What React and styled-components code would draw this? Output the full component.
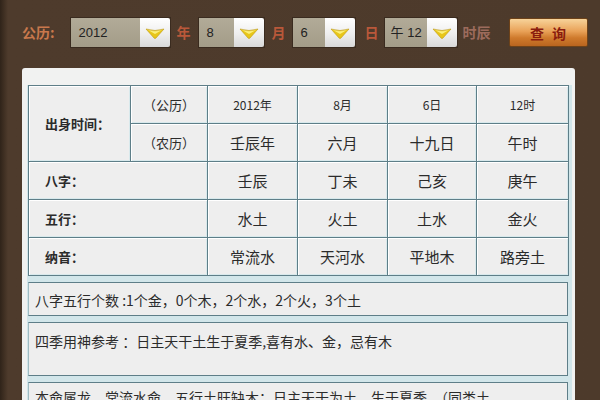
import React from "react";
import styled, { createGlobalStyle } from "styled-components";

const Global = createGlobalStyle`
  html, body { margin: 0; padding: 0; }
  body { background: #4d3a2b; font-family: "Noto Sans CJK SC", "Noto Sans", sans-serif; }
`;

const Page = styled.div`
  width: 600px;
  height: 400px;
  overflow: hidden;
  box-sizing: border-box;
  background: linear-gradient(90deg, #2f2319 0, #3f2f22 4px, #4e3b2c 8px, #4d3a2b 100%);
  display: flex;
  flex-direction: column;
`;

const Toolbar = styled.div`
  height: 68px;
  flex-shrink: 0;
  box-sizing: border-box;
  padding: 18px 0 0 22px;
  display: flex;
  align-items: flex-start;
`;

const Label = styled.span`
  height: 29px;
  line-height: 29px;
  font-size: 14px;
  font-weight: bold;
  color: ${(p) => p.$color || "#c46a3f"};
  margin: 0 ${(p) => p.$mr || 8}px 0 ${(p) => p.$ml || 0}px;
  white-space: nowrap;
`;

const Select = styled.div`
  display: flex;
  height: 29px;
  box-shadow: 0 0 0 1px #3a2b1f;
`;

const SelectValue = styled.div`
  width: ${(p) => p.$w}px;
  background: linear-gradient(#b2ab98, #a39c88);
  color: #222;
  font-family: "Liberation Sans", "Noto Sans CJK SC", sans-serif;
  font-size: 13px;
  line-height: 29px;
  padding-left: ${(p) => p.$pl || 8}px;
  box-sizing: border-box;
  white-space: nowrap;
`;

const SelectButton = styled.div`
  width: 30px;
  background: linear-gradient(#ffffff, #eeeeee 55%, #d9d9d9);
  border-radius: 0 2px 2px 0;
  display: flex;
  align-items: center;
  justify-content: center;
`;

const Arrow = () => (
  <svg width="20" height="12" viewBox="0 0 20 12">
    <path d="M1 2 Q10 5 19 2 L11 11 Q10 12 9 11 Z" fill="#e8c619" stroke="#c09a10" strokeWidth="0.6" />
    <path d="M3 3 Q10 5.5 17 3 L10 7 Z" fill="#fbf07a" />
  </svg>
);

const QueryButton = styled.button`
  margin-left: 10px;
  width: 79px;
  height: 29px;
  border: 1px solid #6d4219;
  border-radius: 2px;
  background: linear-gradient(#f7d39a, #e9a258 45%, #cf7a2c 70%, #b9651f);
  color: #8a1c0e;
  font-family: "Noto Sans CJK SC", sans-serif;
  font-size: 14px;
  font-weight: bold;
  letter-spacing: 8px;
  text-indent: 8px;
  padding: 0;
`;

const Panel = styled.div`
  margin-left: 22px;
  width: 553px;
  flex: 1;
  min-height: 0;
  overflow: hidden;
  background: #f1f2f1;
  border-radius: 3px 3px 0 0;
  padding: 17px 3px 0 5px;
  box-sizing: border-box;
`;

const Frame = styled.div`
  background: #d2e6ea;
  padding: 0 4px 0 1px;
  display: flex;
  flex-direction: column;
  gap: 6px;
`;

const Table = styled.table`
  width: 540px;
  flex-shrink: 0;
  border-collapse: collapse;
  table-layout: fixed;
  background: #eeeeee;
  border: 1px solid #5e7e88;
`;

const Cell = styled.td`
  height: 37px;
  padding: 0;
  border: 1px solid #5e7e88;
  box-shadow: inset 1px 1px 0 #ffffff, inset -1px -1px 0 #d8e9ec;
  text-align: ${(p) => (p.$left ? "left" : "center")};
  padding-left: ${(p) => (p.$left ? "16px" : "0")};
  font-size: ${(p) => p.$fs || 15}px;
  font-weight: ${(p) => (p.$bold ? "bold" : "normal")};
  color: #2b2b2b;
  white-space: nowrap;
`;

const Section = styled.div`
  flex-shrink: 0;
  background: #eeeeee;
  border-top: 1px solid #5e7e88;
  border-bottom: 1px solid #5e7e88;
  border-left: 1px solid #9fbcc3;
  border-right: 1px solid #5e7e88;
  height: ${(p) => p.$h}px;
  box-sizing: border-box;
  padding: ${(p) => p.$pt}px 0 0 6px;
  font-size: 14px;
  color: #2b2b2b;
  white-space: nowrap;
  overflow: hidden;
`;

const cols = [102, 77, 90, 90, 89, 92];

const rows = [
  { label: "八字：", vals: ["壬辰", "丁未", "己亥", "庚午"] },
  { label: "五行：", vals: ["水土", "火土", "土水", "金火"] },
  { label: "纳音：", vals: ["常流水", "天河水", "平地木", "路旁土"] },
];

export default function App() {
  return (
    <>
      <Global />
      <Page>
        <Toolbar>
          <Label $color="#c8784c" $mr={16}>公历:</Label>
          <Select>
            <SelectValue $w={69}>2012</SelectValue>
            <SelectButton><Arrow /></SelectButton>
          </Select>
          <Label $ml={7} $mr={8} $color="#b9583a">年</Label>
          <Select>
            <SelectValue $w={35}>8</SelectValue>
            <SelectButton><Arrow /></SelectButton>
          </Select>
          <Label $ml={8} $mr={7} $color="#b9583a">月</Label>
          <Select>
            <SelectValue $w={32}>6</SelectValue>
            <SelectButton><Arrow /></SelectButton>
          </Select>
          <Label $ml={10} $mr={6} $color="#b9583a">日</Label>
          <Select>
            <SelectValue $w={42} $pl={6}>午 12</SelectValue>
            <SelectButton><Arrow /></SelectButton>
          </Select>
          <Label $ml={6} $mr={0} $color="#9c6b5c">时辰</Label>
          <QueryButton>查询</QueryButton>
        </Toolbar>
        <Panel>
          <Frame>
            <Table>
              <colgroup>
                {cols.map((w, i) => (
                  <col key={i} style={{ width: w }} />
                ))}
              </colgroup>
              <tbody>
                <tr>
                  <Cell rowSpan={2} $left $bold $fs={13}>出身时间：</Cell>
                  <Cell $fs={13}>（公历）</Cell>
                  <Cell $fs={12}>2012年</Cell>
                  <Cell $fs={12}>8月</Cell>
                  <Cell $fs={12}>6日</Cell>
                  <Cell $fs={12}>12时</Cell>
                </tr>
                <tr>
                  <Cell $fs={13}>（农历）</Cell>
                  <Cell>壬辰年</Cell>
                  <Cell>六月</Cell>
                  <Cell>十九日</Cell>
                  <Cell>午时</Cell>
                </tr>
                {rows.map((r) => (
                  <tr key={r.label}>
                    <Cell colSpan={2} $left $bold $fs={13}>{r.label}</Cell>
                    {r.vals.map((v) => (
                      <Cell key={v}>{v}</Cell>
                    ))}
                  </tr>
                ))}
              </tbody>
            </Table>
            <Section $h={34} $pt={7}>八字五行个数 :1个金，0个木，2个水，2个火，3个土</Section>
            <Section $h={54} $pt={8}>四季用神参考 ：日主天干土生于夏季,喜有水、金，忌有木</Section>
            <Section $h={40} $pt={4}>本命属龙，常流水命，五行土旺缺木；日主天干为土，生于夏季，（同类土</Section>
          </Frame>
        </Panel>
      </Page>
    </>
  );
}
